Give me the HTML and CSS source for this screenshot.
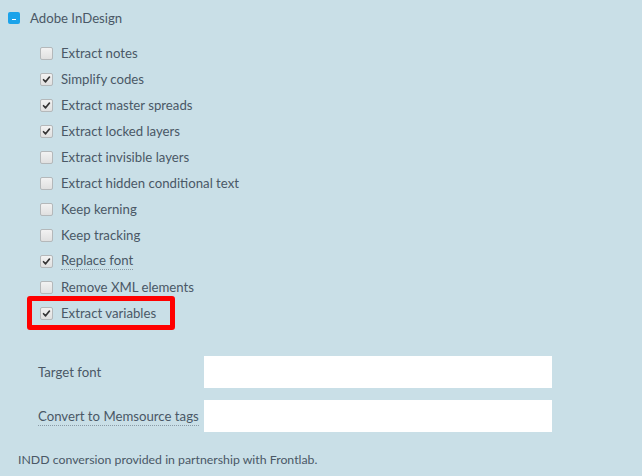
FILE: index.html
```html
<!DOCTYPE html>
<html>
<head>
<meta charset="utf-8">
<link rel="stylesheet" href="styles.css">
</head>
<body>
<div class="panel">
  <div class="group-head">
    <span class="toggle"><span class="minus"></span></span>
    <span class="group-title">Adobe InDesign</span>
  </div>
  <ul class="options">
    <li class="opt"><span class="cb"></span><span class="lbl">Extract notes</span></li>
    <li class="opt"><span class="cb on"><svg viewBox="0 0 13 13"><path d="M3 6.8 L5.4 9.2 L10 3.6" /></svg></span><span class="lbl">Simplify codes</span></li>
    <li class="opt"><span class="cb on"><svg viewBox="0 0 13 13"><path d="M3 6.8 L5.4 9.2 L10 3.6" /></svg></span><span class="lbl">Extract master spreads</span></li>
    <li class="opt"><span class="cb on"><svg viewBox="0 0 13 13"><path d="M3 6.8 L5.4 9.2 L10 3.6" /></svg></span><span class="lbl">Extract locked layers</span></li>
    <li class="opt"><span class="cb"></span><span class="lbl">Extract invisible layers</span></li>
    <li class="opt"><span class="cb"></span><span class="lbl">Extract hidden conditional text</span></li>
    <li class="opt"><span class="cb"></span><span class="lbl">Keep kerning</span></li>
    <li class="opt"><span class="cb"></span><span class="lbl">Keep tracking</span></li>
    <li class="opt"><span class="cb on"><svg viewBox="0 0 13 13"><path d="M3 6.8 L5.4 9.2 L10 3.6" /></svg></span><span class="lbl tip">Replace font</span></li>
    <li class="opt"><span class="cb"></span><span class="lbl">Remove XML elements</span></li>
    <li class="opt highlight"><span class="cb on"><svg viewBox="0 0 13 13"><path d="M3 6.8 L5.4 9.2 L10 3.6" /></svg></span><span class="lbl">Extract variables</span></li>
  </ul>
  <div class="fields">
    <label class="field-lbl">Target font</label>
    <input class="field-input" type="text">
    <label class="field-lbl"><span class="tip">Convert to Memsource tags</span></label>
    <input class="field-input" type="text">
  </div>
  <p class="note">INDD conversion provided in partnership with Frontlab.</p>
</div>
</body>
</html>
```

FILE: styles.css
```css
html, body {
  margin: 0;
  padding: 0;
  background: #c9dfe7;
}
body {
  font-family: "Lato", "Open Sans", sans-serif;
  font-size: 13.2px;
  color: #4a5866;
  width: 642px;
  height: 476px;
  overflow: hidden;
}
.panel {
  padding: 5px 0 0 8px;
}
.group-head {
  display: flex;
  align-items: center;
  height: 26px;
}
.toggle {
  width: 12px;
  height: 12px;
  background: #1ba3ea;
  border-radius: 2px;
  display: flex;
  justify-content: center;
  align-items: flex-end;
  padding-bottom: 4px;
  box-sizing: border-box;
}
.minus {
  width: 4px;
  height: 1px;
  background: #fff;
}
.group-title {
  margin-left: 10px;
}
.options {
  list-style: none;
  margin: 9px 0 0 0;
  padding: 0 0 0 32px;
}
.opt {
  display: flex;
  align-items: center;
  height: 26px;
}
.cb {
  width: 13px;
  height: 13px;
  box-sizing: border-box;
  border: 1px solid #b4b8ba;
  border-radius: 2px;
  background: linear-gradient(#f2f2f2, #e0e0e0);
  flex: none;
  display: flex;
}
.cb svg {
  width: 11px;
  height: 11px;
}
.cb svg path {
  fill: none;
  stroke: #333;
  stroke-width: 2;
  stroke-linecap: round;
  stroke-linejoin: round;
}
.lbl {
  margin-left: 8px;
}
.tip {
  border-bottom: 1px dotted #8a9aa6;
  padding-bottom: 1px;
}
.highlight {
  position: relative;
}
.highlight::after {
  content: "";
  position: absolute;
  left: -13px;
  top: -4px;
  width: 148px;
  height: 34px;
  box-sizing: border-box;
  border: 5px solid #ff0000;
  border-radius: 3px;
}
.fields {
  display: grid;
  grid-template-columns: 166px 348px;
  grid-auto-rows: 32px;
  row-gap: 12px;
  margin: 30px 0 0 30px;
  align-items: center;
}
.field-lbl {
  display: block;
}
.field-input {
  width: 348px;
  height: 32px;
  border: none;
  background: #fff;
  margin: 0;
  padding: 0 8px;
  box-sizing: border-box;
  outline: none;
}
.note {
  margin: 20px 0 0 10px;
  font-size: 12.3px;
}
```
